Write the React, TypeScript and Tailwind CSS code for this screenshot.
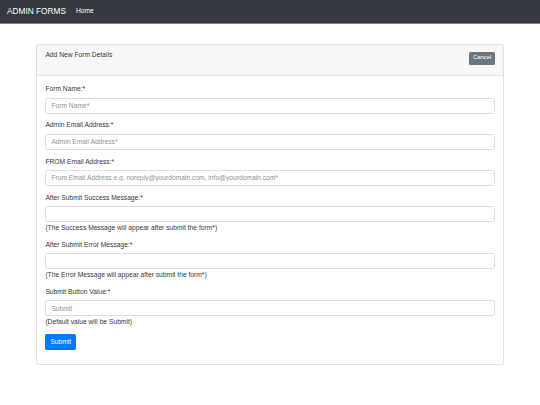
const fields = [
  { label: 'Form Name:*', placeholder: 'Form Name*' },
  { label: 'Admin Email Address:*', placeholder: 'Admin Email Address*' },
  {
    label: 'FROM Email Address:*',
    placeholder: 'From Email Address e.g. noreply@yourdomain.com, info@yourdomain.com*',
  },
  {
    label: 'After Submit Success Message:*',
    placeholder: '',
    help: '(The Success Message will appear after submit the form*)',
  },
  {
    label: 'After Submit Error Message:*',
    placeholder: '',
    help: '(The Error Message will appear after submit the form*)',
  },
  {
    label: 'Submit Button Value:*',
    placeholder: 'Submit',
    help: '(Default value will be Submit)',
  },
];

export default function App() {
  return (
    <div className="min-h-[405px] bg-white text-[#33383d] font-['Liberation_Sans',Arial,sans-serif]">
      <nav className="h-[24px] bg-[#343a40] border-b border-[#787e85] flex items-center px-[7px]">
        <span className="text-white text-[8.3px] leading-none">ADMIN FORMS</span>
        <span className="ml-[10px] text-white text-[6.7px] leading-none">Home</span>
      </nav>

      <div className="pt-[20px] px-[36px]">
        <div className="border border-[#e3e3e3] rounded-[2px]">
          <div className="h-[31px] bg-[#f7f7f7] border-b border-[#e6e6e6] flex justify-between items-start px-[8.4px] pt-[5px]">
            <span className="text-[6.7px] leading-[10px]">Add New Form Details</span>
            <button className="mt-[1.5px] h-[13px] px-[3.4px] bg-[#6c757d] text-white text-[5.9px] leading-none rounded-[1.5px]">
              Cancel
            </button>
          </div>

          <div className="px-[8.4px] pt-[8.4px] pb-[14px]">
            {fields.map((f) => (
              <div key={f.label} className="mb-[6.7px]">
                <label className="block text-[6.7px] leading-[10px] mb-[3.4px]">{f.label}</label>
                <input
                  readOnly
                  placeholder={f.placeholder}
                  className="block w-full h-[16px] border border-[#dcdfe2] rounded-[1.7px] px-[5px] text-[6.7px] outline-none placeholder:text-[#8e949a]"
                />
                {f.help && <p className="text-[6.7px] leading-[11px]">{f.help}</p>}
              </div>
            ))}
            <button className="block h-[16px] px-[5px] bg-[#007bff] text-white text-[6.7px] leading-none rounded-[1.7px]">
              Submit
            </button>
          </div>
        </div>
      </div>
    </div>
  );
}
